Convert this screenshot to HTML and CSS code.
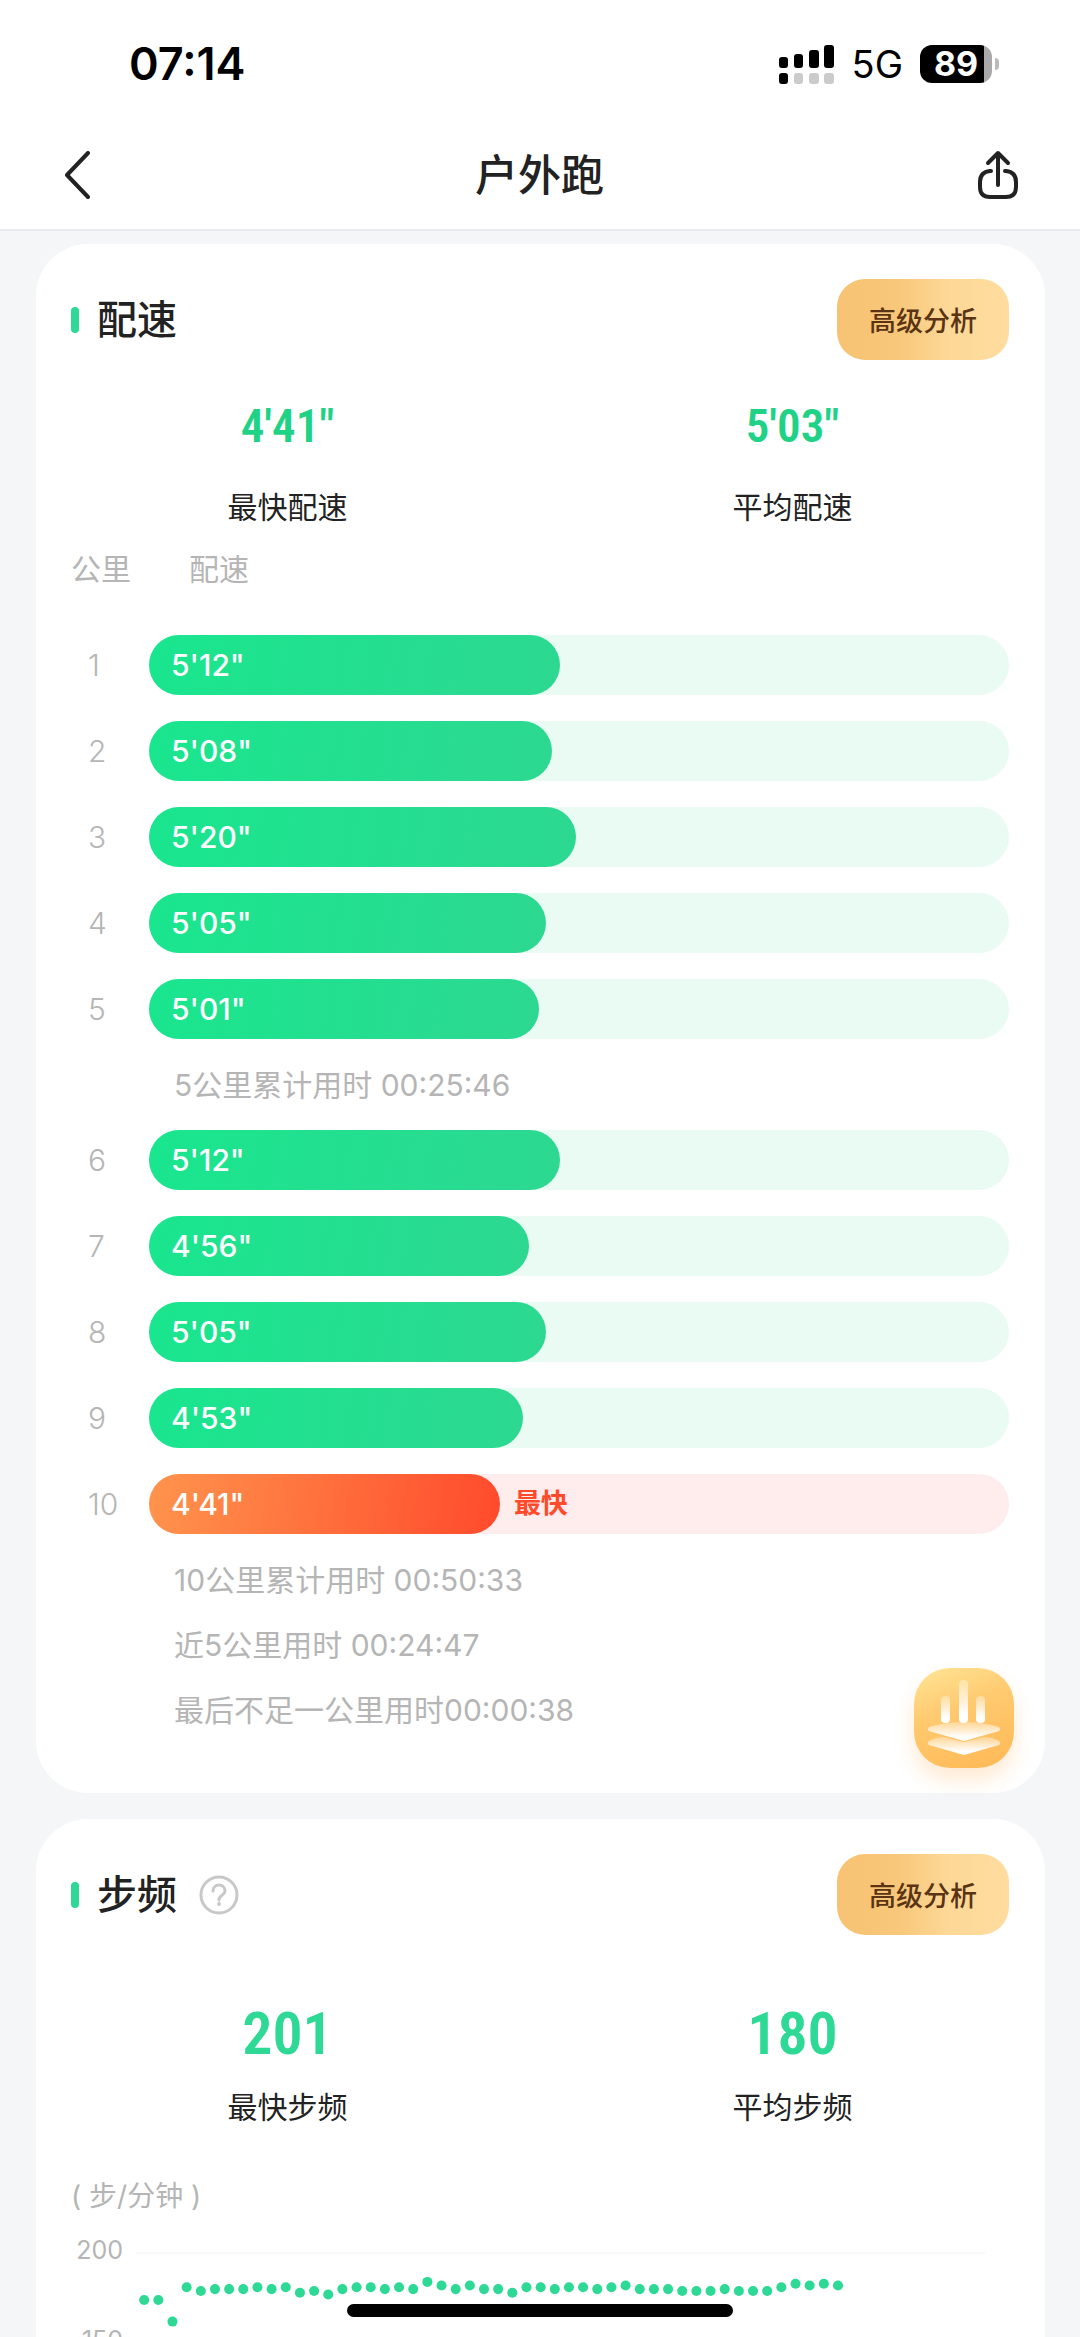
FILE: index.html
```html
<!DOCTYPE html>
<html lang="zh-CN">
<head>
    <meta charset="UTF-8">
    <meta name="viewport" content="width=device-width, initial-scale=1.0">
    <title>户外跑</title>
    <link rel="stylesheet" href="styles.css">
</head>
<body>

    <header class="top">
        <div class="status">
            <span class="clock">07:14</span>
            <div class="status-right">
                <svg class="signal" width="55" height="39" viewBox="0 0 55 39">
                    <rect x="0" y="12" width="9" height="11" rx="3"/>
                    <rect x="15" y="9" width="9" height="14" rx="3"/>
                    <rect x="30" y="5" width="10" height="18" rx="3"/>
                    <rect x="45" y="0" width="10" height="23" rx="3"/>
                    <rect x="0" y="28" width="9" height="11" rx="3"/>
                    <g fill="#cbcbcb">
                        <rect x="15" y="28" width="9" height="11" rx="3"/>
                        <rect x="30" y="28" width="10" height="11" rx="3"/>
                        <rect x="45" y="28" width="10" height="11" rx="3"/>
                    </g>
                </svg>
                <span class="network">5G</span>
                <span class="battery">89</span>
            </div>
        </div>
        <nav class="nav">
            <button class="icon-btn" aria-label="返回">
                <svg width="26" height="48" viewBox="0 0 26 48"><path d="M24 2 3 24 24 46"/></svg>
            </button>
            <h1>户外跑</h1>
            <button class="icon-btn" aria-label="分享">
                <svg width="42" height="50" viewBox="0 0 42 50"><path d="M21 35V3M11 13 21 3 31 13M14 21H13Q3 22 3 32V37Q3 47 13 47H29Q39 47 39 37V32Q39 22 29 21H28"/></svg>
            </button>
        </nav>
    </header>

    <main class="content">

        <!-- Pace -->
        <section class="card">
            <div class="card-head">
                <h2>配速</h2>
                <button class="analyse">高级分析</button>
            </div>
            <div class="stats">
                <div class="stat">
                    <div class="value">4'41"</div>
                    <div class="label">最快配速</div>
                </div>
                <div class="stat">
                    <div class="value">5'03"</div>
                    <div class="label">平均配速</div>
                </div>
            </div>
            <table class="pace">
                <thead>
                    <tr><th class="km">公里</th><th>配速</th></tr>
                </thead>
                <tbody>
                    <tr><td class="km">1</td><td><div class="track"><div class="bar" style="width: 47.8%">5'12"</div></div></td></tr>
                    <tr><td class="km">2</td><td><div class="track"><div class="bar" style="width: 46.9%">5'08"</div></div></td></tr>
                    <tr><td class="km">3</td><td><div class="track"><div class="bar" style="width: 49.7%">5'20"</div></div></td></tr>
                    <tr><td class="km">4</td><td><div class="track"><div class="bar" style="width: 46.2%">5'05"</div></div></td></tr>
                    <tr><td class="km">5</td><td><div class="track"><div class="bar" style="width: 45.3%">5'01"</div></div></td></tr>
                    <tr class="note"><td></td><td>5公里累计用时 00:25:46</td></tr>
                    <tr><td class="km">6</td><td><div class="track"><div class="bar" style="width: 47.8%">5'12"</div></div></td></tr>
                    <tr><td class="km">7</td><td><div class="track"><div class="bar" style="width: 44.2%">4'56"</div></div></td></tr>
                    <tr><td class="km">8</td><td><div class="track"><div class="bar" style="width: 46.2%">5'05"</div></div></td></tr>
                    <tr><td class="km">9</td><td><div class="track"><div class="bar" style="width: 43.5%">4'53"</div></div></td></tr>
                    <tr><td class="km">10</td><td><div class="track fastest"><div class="bar" style="width: 40.8%">4'41"</div><span>最快</span></div></td></tr>
                    <tr class="note"><td></td><td>10公里累计用时 00:50:33</td></tr>
                    <tr class="note"><td></td><td>近5公里用时 00:24:47</td></tr>
                    <tr class="note"><td></td><td>最后不足一公里用时00:00:38</td></tr>
                </tbody>
            </table>
        </section>

        <!-- Cadence -->
        <section class="card">
            <div class="card-head">
                <h2>步频</h2>
                <button class="icon-btn help" aria-label="说明">
                    <svg width="40" height="40" viewBox="0 0 40 40">
                        <circle cx="20" cy="20" r="18"/>
                        <path d="M14 16C14 8 26 8 26 16C26 20 20 20 20 25"/>
                        <circle class="dot" cx="20" cy="29" r="2"/>
                    </svg>
                </button>
                <button class="analyse">高级分析</button>
            </div>
            <div class="stats cadence">
                <div class="stat">
                    <div class="value">201</div>
                    <div class="label">最快步频</div>
                </div>
                <div class="stat">
                    <div class="value">180</div>
                    <div class="label">平均步频</div>
                </div>
            </div>
            <div class="unit">( 步/分钟 )</div>
            <svg id="chart" class="chart" viewBox="0 0 936 320"></svg>
        </section>
    </main>

    <button class="fab" aria-label="数据分析">
        <svg width="100" height="100" viewBox="0 0 100 100">
            <defs>
                <linearGradient id="stick" x1="0" y1="0" x2="0" y2="1">
                    <stop offset="0" stop-color="#fff" stop-opacity=".3"/>
                    <stop offset="0.8" stop-color="#fff"/>
                </linearGradient>
            </defs>
            <g fill="url(#stick)">
                <rect x="27" y="28" width="9" height="27" rx="4"/>
                <rect x="45" y="12" width="9" height="43" rx="4"/>
                <rect x="62" y="28" width="9" height="27" rx="4"/>
                <path d="M15 59Q32 54 50 54Q68 54 85 59Q87 61 85 63L50 73 15 63Q13 61 15 59Z"/>
                <path d="M15 73Q22 69 30 69L50 74 70 69Q78 69 85 73Q87 75 85 77L50 87 15 77Q13 75 15 73Z"/>
            </g>
        </svg>
    </button>
    <div class="home-indicator"></div>

    <script src="script.js"></script>
</body>
</html>
```
FILE: styles.css
```css
* {
    box-sizing: border-box;
    margin: 0;
    padding: 0;
}

body {
    display: flex;
    flex-direction: column;
    height: 100vh;
    overflow: hidden;
    background: #f4f6f8;
    color: #222;
    font-family: Inter, "Noto Sans CJK SC", sans-serif;
    font-size: 30px;
    line-height: 40px;
}

button {
    border: none;
    background: none;
    font-family: inherit;
    cursor: pointer;
}

/* Status bar and navigation */
.top {
    background: #fff;
    border-bottom: 2px solid #e9ebec;
}

.status {
    display: flex;
    justify-content: space-between;
    align-items: center;
    height: 120px;
    padding: 8px 88px 0 129px;
    color: #000;
}

.clock {
    font-size: 45px;
    font-weight: 600;
}

.status-right {
    display: flex;
    align-items: center;
}

.network {
    margin: 0 17px 0 18px;
    font-size: 38px;
}

.battery {
    position: relative;
    width: 72px;
    height: 38px;
    border-radius: 12px;
    background: linear-gradient(90deg, #000 89%, #aaa 89%);
    color: #fff;
    font-size: 34px;
    font-weight: 700;
    line-height: 38px;
    text-align: center;
}

.battery::after {
    content: "";
    position: absolute;
    right: -7px;
    top: 13px;
    width: 4px;
    height: 12px;
    border-radius: 0 4px 4px 0;
    background: #bbb;
}

.nav {
    display: flex;
    justify-content: space-between;
    align-items: center;
    height: 109px;
    padding: 0 61px 0 64px;
}

.nav h1 {
    font-size: 43px;
    font-weight: 500;
    margin-left: 12px;
}

.icon-btn {
    display: flex;
}

.icon-btn svg {
    fill: none;
    stroke: #222;
    stroke-width: 4;
    stroke-linecap: round;
    stroke-linejoin: round;
}

/* Cards */
.content {
    flex: 1;
    overflow-y: auto;
    scrollbar-width: none;
    padding: 13px 35px 13px 36px;
}

.card {
    margin-bottom: 26px;
    padding: 35px 36px 51px 35px;
    border-radius: 52px;
    background: #fff;
}

.card-head {
    display: flex;
    align-items: center;
}

.card-head h2 {
    display: flex;
    align-items: center;
    gap: 18px;
    font-size: 40px;
    font-weight: 500;
}

.card-head h2::before {
    content: "";
    width: 8px;
    height: 26px;
    border-radius: 4px;
    background: #2dd994;
}

.help {
    margin-left: 22px;
}

.help svg {
    stroke: #c8c8c8;
    stroke-width: 3;
}

.help .dot {
    fill: #c8c8c8;
    stroke: none;
}

.analyse {
    margin-left: auto;
    width: 172px;
    height: 81px;
    border-radius: 28px;
    background: linear-gradient(90deg, #f7c273, #f8c779 35%, #fdd897 65%, #ffdc9f);
    color: #5a3413;
    font-size: 27px;
    font-weight: 500;
}

.stats {
    display: flex;
    margin: 36px -36px 22px;
}

.stat {
    flex: 1;
    text-align: center;
}

.value {
    margin-bottom: 31px;
    color: #1fd286;
    font-family: "Roboto Condensed", Roboto, sans-serif;
    font-size: 47px;
    font-weight: 600;
    line-height: 60px;
}

.cadence {
    margin-top: 69px;
    margin-bottom: 49px;
}

.cadence .value {
    margin-bottom: 23px;
    color: #2dd994;
    font-size: 60px;
}

/* Pace table */
.pace {
    width: 100%;
    border-spacing: 0;
    table-layout: fixed;
    color: #b5b5b5;
}

.pace th {
    height: 73px;
    padding-left: 40px;
    font-weight: 400;
    text-align: left;
    vertical-align: top;
}

.pace th.km {
    width: 78px;
    padding-left: 0;
}

.pace td.km {
    padding-left: 17px;
    font-weight: 300;
}

.pace tbody tr {
    height: 86px;
}

.pace tbody .note {
    height: 65px;
}

.note td {
    padding-left: 25px;
}

.track {
    display: flex;
    align-items: center;
    height: 60px;
    border-radius: 30px;
    background: #e9fbf3;
}

.bar {
    height: 60px;
    padding-left: 22px;
    border-radius: 30px;
    background: linear-gradient(100deg, #19e68e, #2dd891);
    color: #fff;
    font-weight: 500;
    line-height: 60px;
}

.fastest {
    background: #ffecec;
    color: #ff4a2c;
    font-size: 27px;
    font-weight: 700;
}

.fastest .bar {
    margin-right: 14px;
    background: linear-gradient(100deg, #ff944d, #ff4a2c);
    font-size: 30px;
    font-weight: 500;
}

/* Cadence chart */
.unit {
    color: #b5b5b5;
    font-size: 28px;
}

.chart {
    display: block;
    width: 100%;
    margin-top: 14px;
}

.chart line {
    stroke: #f7f7f7;
    stroke-width: 2;
}

.chart text {
    fill: #b5b5b5;
    font-size: 25px;
    text-anchor: end;
}

.chart circle {
    fill: #2dd994;
}

/* Floating over the page */
.fab {
    position: fixed;
    right: 66px;
    bottom: 569px;
    display: flex;
    width: 100px;
    height: 100px;
    border-radius: 36px;
    background: linear-gradient(160deg, #ffe596, #ffca70 40%, #ffb854);
    box-shadow: 0 12px 20px rgba(255, 170, 80, 0.25);
}

.home-indicator {
    position: fixed;
    left: 50%;
    bottom: 20px;
    width: 386px;
    height: 13px;
    border-radius: 7px;
    background: #000;
    transform: translateX(-50%);
}
```
FILE: script.js
```javascript
const chart = document.getElementById('chart');

// Steps per minute, one sample per dot
const cadence = [
    174, 174, 162, 181, 179, 180, 180, 180, 181, 180,
    181, 178, 179, 177, 180, 181, 181, 180, 181, 180,
    184, 182, 180, 182, 180, 180, 178, 181, 181, 180,
    181, 181, 180, 181, 182, 180, 180, 180, 179, 179,
    179, 180, 179, 179, 179, 181, 183, 182, 183, 182
];

function toY(value) {
    return 23 + (200 - value) * 1.8;
}

function add(name, attrs, text) {
    const el = document.createElementNS('http://www.w3.org/2000/svg', name);
    for (const key in attrs) {
        el.setAttribute(key, attrs[key]);
    }
    if (text) {
        el.textContent = text;
    }
    chart.appendChild(el);
}

// Grid lines with their labels
[200, 150, 100, 50].forEach(value => {
    const y = toY(value);
    add('line', { x1: 65, x2: 912, y1: y, y2: y });
    add('text', { x: 52, y: y + 6 }, String(value));
});

cadence.forEach((value, i) => {
    add('circle', { cx: 73 + i * 14.13, cy: toY(value), r: 5 });
});
```
